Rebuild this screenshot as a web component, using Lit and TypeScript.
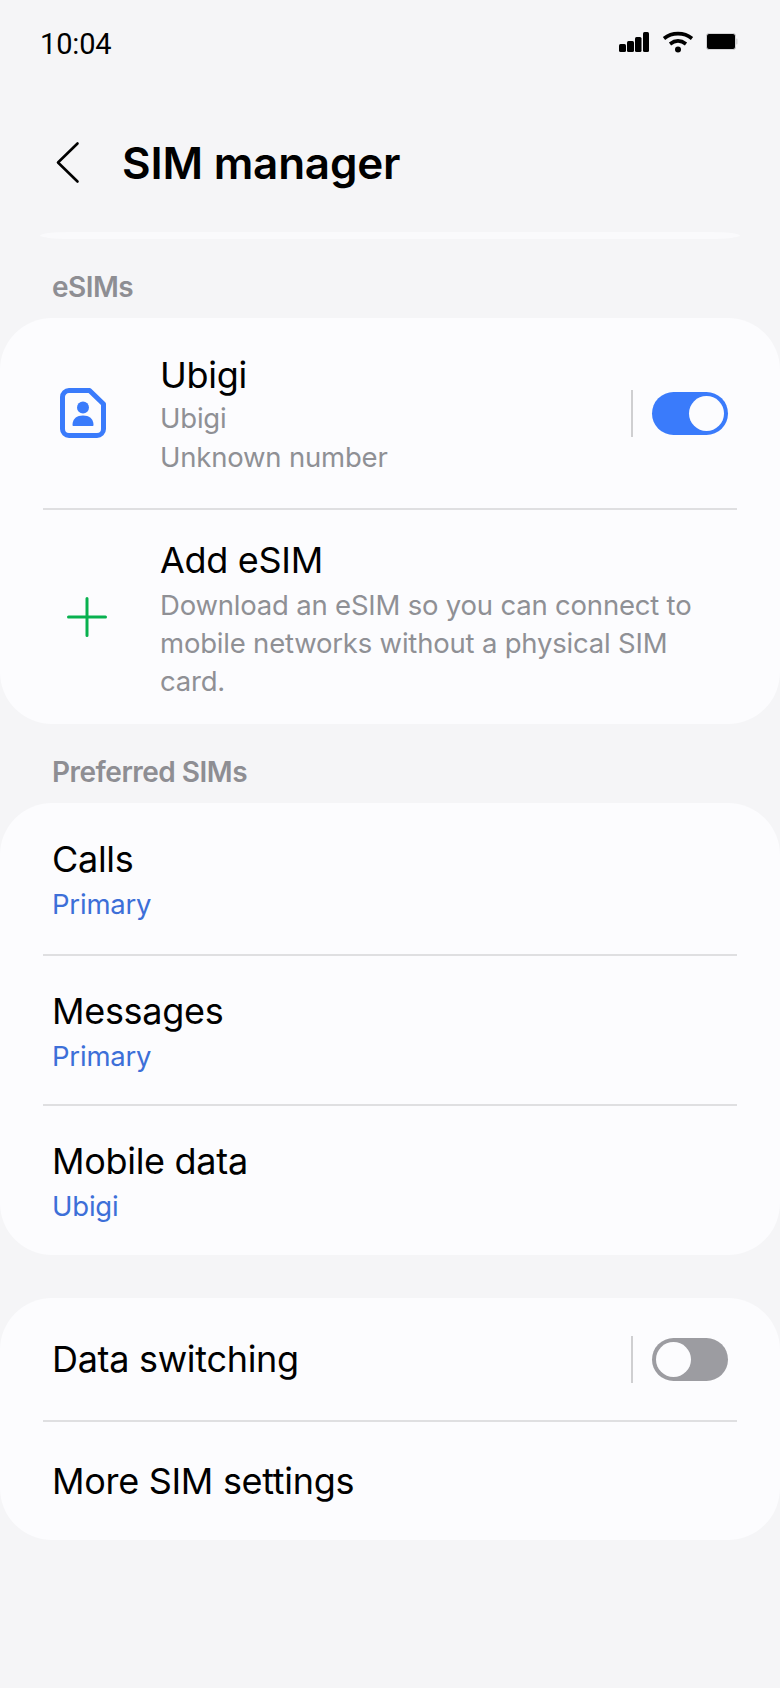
import { LitElement, html, css } from "lit";
import { customElement } from "lit/decorators.js";

@customElement("app-root")
export class AppRoot extends LitElement {
  static styles = css`
    :host { display: block; width: 780px; height: 1688px; background: #f5f5f7; font-family: "Inter", "Noto Sans", sans-serif; color: #000; overflow: hidden; }
    .status { height: 84px; box-sizing: border-box; padding: 26px 42px 0 40px; display: flex; justify-content: space-between; align-items: flex-start; }
    .time { font-family: "Roboto", sans-serif; font-size: 29px; line-height: 36px; letter-spacing: -0.15px; }
    .sicons { display: flex; align-items: center; margin-top: 4px; }
    .wifi, .battery { margin-left: 12px; }
    .header { height: 148px; box-sizing: border-box; padding-top: 53px; padding-left: 54px; display: flex; align-items: flex-start; }
    .back { width: 26px; height: 44px; margin-top: 3px; flex: none; }
    .title { margin-left: 42px; font-size: 44px; line-height: 52px; font-weight: 600; letter-spacing: -0.2px; }
    .edge { margin: 0 40px; height: 7px; background: #fafafc; border-radius: 30px / 3.5px; }
    .section { font-size: 28px; line-height: 32px; font-weight: 600; color: #8e8e93; padding-left: 52px; letter-spacing: -0.5px; }
    .sec1 { margin-top: 32px; margin-bottom: 15px; }
    .sec2 { margin-top: 32px; margin-bottom: 15px; }
    .card { background: #fcfcfe; border-radius: 52px; }
    .row { display: flex; align-items: center; margin: 0 43px; box-sizing: border-box; border-bottom: 2px solid #dfdfe1; }
    .row:last-child { border-bottom: 0; }
    .icon-cell { width: 79px; flex: none; display: flex; justify-content: center; margin-right: 38px; }
    .icon-cell.plus { width: 87px; margin-right: 30px; }
    .grow { flex: 1; min-width: 0; }
    .r-sim { height: 192px; }
    .r-add { height: 214px; }
    .r-sim .grow { padding-top: 5px; }
    .r-add .grow { padding-top: 4px; }
    .r-pref { height: 150px; padding-left: 9px; }
    .r-pref.first { height: 153px; }
    .r-pref.last { height: 149px; }
    .r-pref .grow { padding-top: 3px; }
    .r-switch { height: 124px; padding-left: 9px; }
    .r-more { height: 118px; padding-left: 9px; }
    .main { font-size: 36px; line-height: 42px; letter-spacing: -0.3px; }
    .r-sim .main { margin-bottom: 3px; }
    .r-add .main { margin-bottom: 5px; }
    .r-pref .main { margin-bottom: 6px; }
    .sub { font-size: 27.5px; line-height: 39.5px; color: #8f9095; letter-spacing: -0.2px; }
    .r-add .sub { line-height: 38px; }
    .blue { font-size: 27.5px; line-height: 36px; color: #3d6fd8; letter-spacing: -0.2px; }
    .vline { width: 2px; height: 47px; background: #cfcfd1; flex: none; }
    .toggle { width: 76px; height: 43px; border-radius: 22px; margin: 0 9px 0 19px; flex: none; box-sizing: border-box; padding: 4px; display: flex; }
    .toggle.on { background: #3a7bfb; justify-content: flex-end; }
    .toggle.off { background: #9c9ca1; justify-content: flex-start; }
    .knob { width: 35px; height: 35px; border-radius: 50%; background: #fcfcfe; }
    .gap { height: 43px; }
  `;

  render() {
    return html`
      <div class="status">
        <div class="time">10:04</div>
        <div class="sicons">
          <svg width="32" height="22" viewBox="0 0 32 22" fill="#000"><rect x="1" y="13" width="7" height="8" rx="1.5"/><rect x="9" y="10" width="7" height="11" rx="1.5"/><rect x="17" y="6" width="6.5" height="15" rx="1.5"/><rect x="25" y="1" width="6" height="20" rx="1.5"/></svg>
          <svg class="wifi" width="32" height="24" viewBox="0 0 32 24" fill="none" stroke="#000" stroke-width="3.6"><path d="M2 8.500C10 2 22 2 30 8.500"/><path d="M8 14C13 10.200 19 10.200 24 14"/><circle cx="16" cy="19.500" r="3" fill="#000" stroke="none"/></svg>
          <svg class="battery" width="32" height="20" viewBox="0 0 32 20"><rect x="0.500" y="1.500" width="29" height="16" rx="2.500" fill="#000" stroke="#d4d4d6" stroke-width="1"/><rect x="29.500" y="6.500" width="2" height="6" rx="1" fill="#d4d4d6"/></svg>
        </div>
      </div>
      <div class="header">
        <svg class="back" viewBox="0 0 26 44" fill="none" stroke="#000" stroke-width="2.600" stroke-linecap="round" stroke-linejoin="round"><path d="M23.500 3.500L4 22.500 23.500 41.500"/></svg>
        <div class="title">SIM manager</div>
      </div>
      <div class="edge"></div>
      <div class="section sec1">eSIMs</div>
      <div class="card">
        <div class="row r-sim">
          <div class="icon-cell">
            <svg width="46" height="50" viewBox="0 0 46 50"><path d="M9 2.500H29.500L43.500 16V41a6.500 6.500 0 0 1-6.500 6.500H9A6.500 6.500 0 0 1 2.500 41V9A6.500 6.500 0 0 1 9 2.500Z" fill="none" stroke="#3a7bfb" stroke-width="5" stroke-linejoin="round"/><circle cx="23" cy="19.500" r="6" fill="#3a7bfb"/><path d="M12.500 37c0-6.500 4.500-9.500 10.500-9.500s10.500 3 10.500 9.500c0 .8-.5 1-1 1H13.500c-.5 0-1-.2-1-1Z" fill="#3a7bfb"/></svg>
          </div>
          <div class="grow">
            <div class="main">Ubigi</div>
            <div class="sub">Ubigi</div>
            <div class="sub">Unknown number</div>
          </div>
          <div class="vline"></div>
          <div class="toggle on"><div class="knob"></div></div>
        </div>
        <div class="row r-add">
          <div class="icon-cell plus">
            <svg width="40" height="40" viewBox="0 0 40 40" stroke="#08b14f" stroke-width="3" stroke-linecap="round"><path d="M20 1.500V38.500M1.500 20H38.500"/></svg>
          </div>
          <div class="grow">
            <div class="main">Add eSIM</div>
            <div class="sub">Download an eSIM so you can connect to<br>mobile networks without a physical SIM<br>card.</div>
          </div>
        </div>
      </div>
      <div class="section sec2">Preferred SIMs</div>
      <div class="card">
        <div class="row r-pref first"><div class="grow"><div class="main">Calls</div><div class="blue">Primary</div></div></div>
        <div class="row r-pref"><div class="grow"><div class="main">Messages</div><div class="blue">Primary</div></div></div>
        <div class="row r-pref last"><div class="grow"><div class="main">Mobile data</div><div class="blue">Ubigi</div></div></div>
      </div>
      <div class="gap"></div>
      <div class="card">
        <div class="row r-switch"><div class="grow main">Data switching</div><div class="vline"></div><div class="toggle off"><div class="knob"></div></div></div>
        <div class="row r-more"><div class="grow main">More SIM settings</div></div>
      </div>
    `;
  }
}
